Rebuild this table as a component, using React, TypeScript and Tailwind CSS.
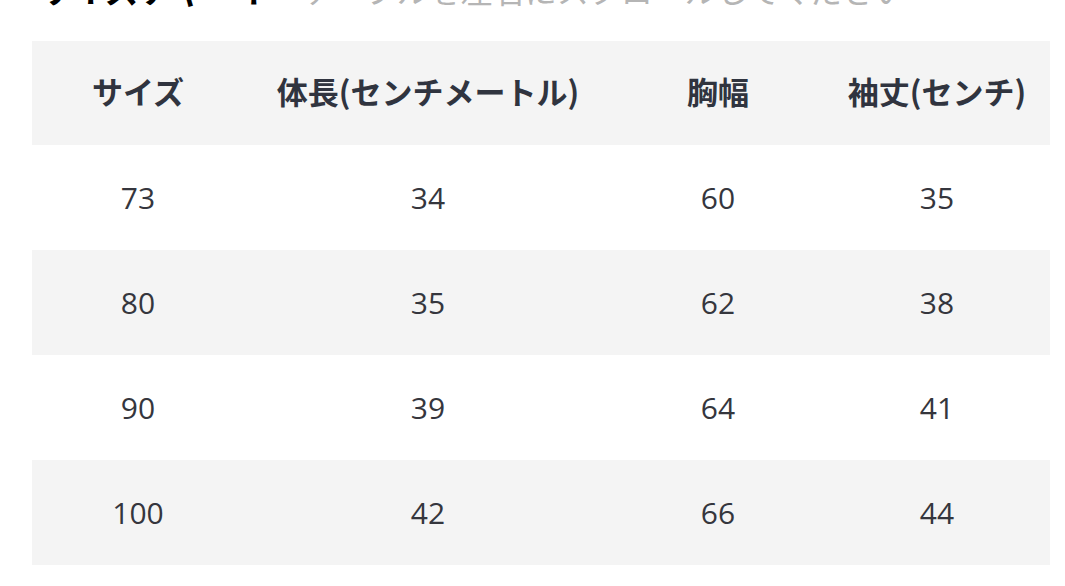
const headers = ["サイズ", "体長(センチメートル)", "胸幅", "袖丈(センチ)"];

const rows = [
  ["73", "34", "60", "35"],
  ["80", "35", "62", "38"],
  ["90", "39", "64", "41"],
  ["100", "42", "66", "44"],
];

const widths = ["w-[212px]", "w-[368px]", "w-[212px]", "w-[226px]"];

export default function App() {
  return (
    <div className="h-[586px] w-[1065px] overflow-hidden bg-white font-['Open_Sans','Noto_Sans_CJK_JP',sans-serif]">
      <div className="mt-[-27px] flex items-baseline whitespace-nowrap pl-[38px] leading-[34px]">
        <span className="text-[34px] font-bold text-black">サイズチャート</span>
        <span className="ml-[28px] text-[32px] text-[#b5b5b5]">テーブルを左右にスクロールしてください</span>
      </div>
      <table className="mt-[33px] ml-[32px] w-[1018px] border-collapse text-center">
        <thead>
          <tr className="h-[104px] bg-[#f4f4f4]">
            {headers.map((h, i) => (
              <th
                key={h}
                className={`${widths[i]} p-0 pb-[4px] font-['Noto_Sans_CJK_JP',sans-serif] text-[31px] font-bold text-[#30343f]`}
              >
                {h}
              </th>
            ))}
          </tr>
        </thead>
        <tbody>
          {rows.map((r, ri) => (
            <tr key={ri} className={`h-[105px] ${ri % 2 === 1 ? "bg-[#f4f4f4]" : "bg-white"}`}>
              {r.map((c, ci) => (
                <td key={ci} className="p-0 text-[30px] text-[#35363d]">
                  {c}
                </td>
              ))}
            </tr>
          ))}
        </tbody>
      </table>
    </div>
  );
}
